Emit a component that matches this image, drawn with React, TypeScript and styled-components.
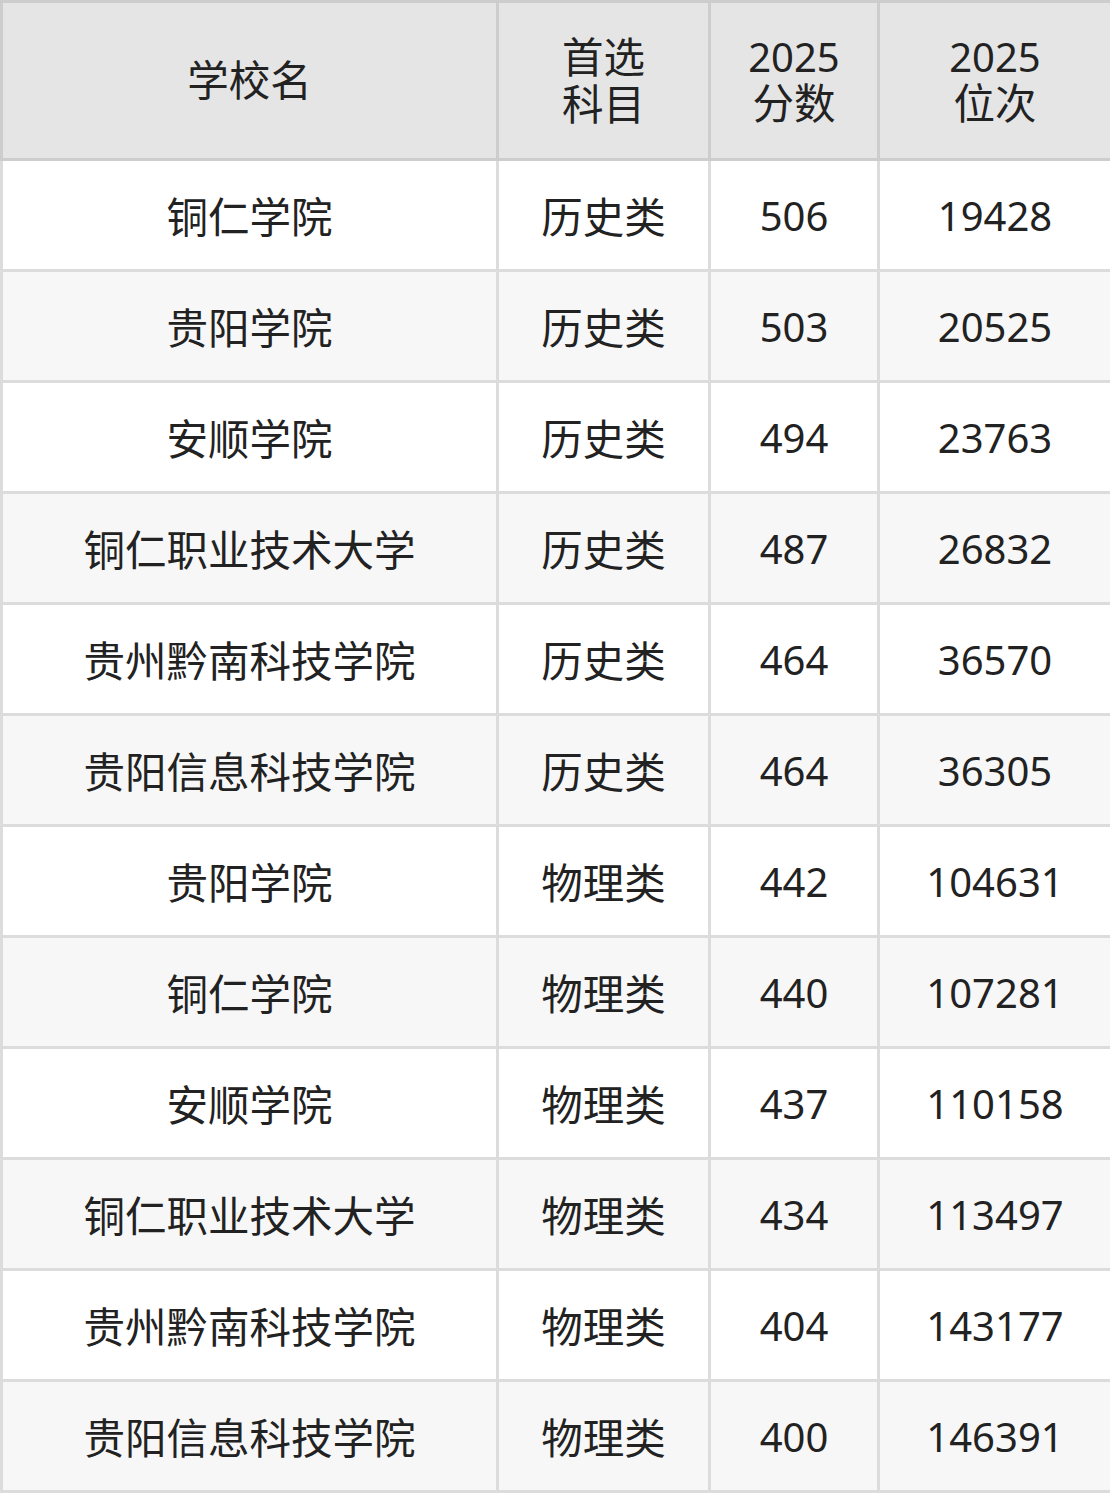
import React from "react";
import styled, { createGlobalStyle } from "styled-components";

const GlobalStyle = createGlobalStyle`
  html, body {
    margin: 0;
    padding: 0;
    background: #fff;
  }
  body {
    font-family: "Noto Sans", "Noto Sans CJK SC", sans-serif;
    color: #222;
  }
`;

const Table = styled.table`
  width: 1110px;
  border-collapse: collapse;
  table-layout: fixed;
`;

const Th = styled.th`
  background: #e5e5e5;
  border: 3px solid #cdcdcd;
  height: 155px;
  padding: 0;
  font-weight: 400;
  font-size: 40px;
  line-height: 46px;
  text-align: center;
  vertical-align: middle;
`;

// chinese glyphs in the picture come out a touch larger than the digits
const Cjk = styled.span`
  font-size: 41.5px;
`;

const Row = styled.tr<{ $alt: boolean }>`
  background: ${(p) => (p.$alt ? "#f7f7f7" : "#fff")};
`;

const Td = styled.td`
  border: 3px solid #dcdcdc;
  height: 108px;
  padding: 0;
  font-size: 40px;
  text-align: center;
  vertical-align: middle;
`;

type Item = [string, string, number, number];

const rows: Item[] = [
  ["铜仁学院", "历史类", 506, 19428],
  ["贵阳学院", "历史类", 503, 20525],
  ["安顺学院", "历史类", 494, 23763],
  ["铜仁职业技术大学", "历史类", 487, 26832],
  ["贵州黔南科技学院", "历史类", 464, 36570],
  ["贵阳信息科技学院", "历史类", 464, 36305],
  ["贵阳学院", "物理类", 442, 104631],
  ["铜仁学院", "物理类", 440, 107281],
  ["安顺学院", "物理类", 437, 110158],
  ["铜仁职业技术大学", "物理类", 434, 113497],
  ["贵州黔南科技学院", "物理类", 404, 143177],
  ["贵阳信息科技学院", "物理类", 400, 146391],
];

const App: React.FC = () => (
  <>
    <GlobalStyle />
    <Table>
      <colgroup>
        <col style={{ width: 496 }} />
        <col style={{ width: 212 }} />
        <col style={{ width: 169 }} />
        <col style={{ width: 233 }} />
      </colgroup>
      <thead>
        <tr>
          <Th>
            <Cjk>学校名</Cjk>
          </Th>
          <Th>
            <Cjk>首选</Cjk>
            <br />
            <Cjk>科目</Cjk>
          </Th>
          <Th>
            2025
            <br />
            <Cjk>分数</Cjk>
          </Th>
          <Th>
            2025
            <br />
            <Cjk>位次</Cjk>
          </Th>
        </tr>
      </thead>
      <tbody>
        {rows.map(([name, subject, score, rank], i) => (
          <Row key={i} $alt={i % 2 === 1}>
            <Td>
              <Cjk>{name}</Cjk>
            </Td>
            <Td>
              <Cjk>{subject}</Cjk>
            </Td>
            <Td>{score}</Td>
            <Td>{rank}</Td>
          </Row>
        ))}
      </tbody>
    </Table>
  </>
);

export default App;
